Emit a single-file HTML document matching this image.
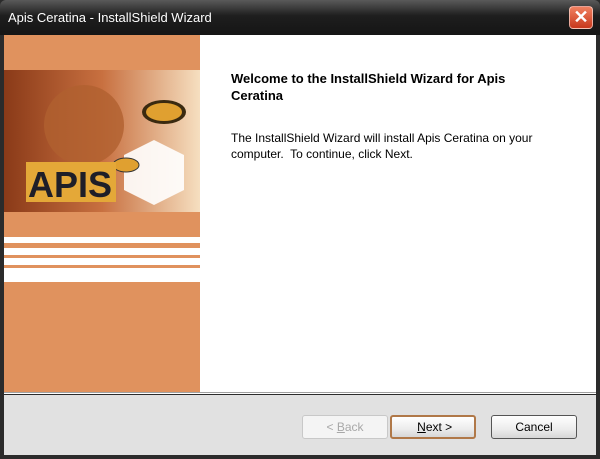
<!DOCTYPE html>
<html><head><meta charset="utf-8"><style>
*{margin:0;padding:0;box-sizing:border-box}
body{width:600px;height:459px;overflow:hidden;background:#2b2b2b;font-family:"Liberation Sans",Arial,sans-serif;position:relative}
.title{position:absolute;left:0;top:0;width:600px;height:35px;background:linear-gradient(#5a5a5a,#1e1e1e 45%,#151515);border-radius:6px 6px 0 0}
.title span{position:absolute;left:8px;top:10px;color:#fff;font-size:13px}
.close{position:absolute;left:569px;top:6px;width:24px;height:23px;border-radius:4px;background:linear-gradient(#f08060,#c8381c);border:1px solid #fff8;color:#fff;font-size:18px;text-align:center;line-height:21px;font-weight:bold}
.left{position:absolute;left:4px;top:35px;width:196px;height:357px;background:#e0925e}
.white{position:absolute;left:200px;top:35px;width:396px;height:357px;background:#fff}
.sep{position:absolute;left:4px;top:392px;width:592px;height:2px;background:#a0a0a0;border-bottom:1px solid #fff}
.bot{position:absolute;left:4px;top:395px;width:592px;height:60px;background:#e1e1e1}
.stripe{position:absolute;left:0;width:196px;background:#fff}
.h{position:absolute;left:231px;top:70px;font-weight:bold;font-size:13px;line-height:17px;width:318px}
.p{position:absolute;left:231px;top:130px;font-size:12px;line-height:16px;width:340px}
.btn{position:absolute;top:415px;height:24px;width:86px;border:1px solid #555;border-radius:3px;background:linear-gradient(#fff,#ececec 60%,#d6d6d6);font-size:12px;text-align:center;line-height:22px}
</style></head><body>
<div class="title"><span>Apis Ceratina - InstallShield Wizard</span><div class="close">✕</div></div>
<div class="left">
 <svg width="196" height="180" style="position:absolute;left:0;top:35px">
  <defs><linearGradient id="g" x1="0" x2="1"><stop offset="0" stop-color="#8a3a18"/><stop offset=".5" stop-color="#c87040"/><stop offset="1" stop-color="#f6dfc0"/></linearGradient></defs>
  <rect x="0" y="0" width="196" height="142" fill="url(#g)"/>
  <circle cx="80" cy="55" r="40" fill="#b06030" opacity=".8"/>
  <polygon points="150,70 180,85 180,120 150,135 120,120 120,85" fill="#fff" opacity=".9"/>
  <ellipse cx="160" cy="42" rx="22" ry="12" fill="#3a2a10"/>
  <ellipse cx="160" cy="42" rx="18" ry="9" fill="#e0a030"/>
  <ellipse cx="122" cy="95" rx="13" ry="7" fill="#e0a030" stroke="#333"/>
  <rect x="22" y="92" width="90" height="40" fill="#e4a838"/>
  <text x="24" y="127" font-family="Liberation Sans" font-weight="bold" font-size="36" fill="#1e1e28">APIS</text>
 </svg>
 <div class="stripe" style="top:202px;height:6px"></div>
 <div class="stripe" style="top:213px;height:7px"></div>
 <div class="stripe" style="top:223px;height:7px"></div>
 <div class="stripe" style="top:233px;height:14px"></div>
</div>
<div class="white"></div>
<div class="h">Welcome to the InstallShield Wizard for Apis Ceratina</div>
<div class="p">The InstallShield Wizard will install Apis Ceratina on your computer.&nbsp; To continue, click Next.</div>
<div class="sep"></div>
<div class="bot"></div>
<div class="btn" style="left:302px;border-color:#c8c8c8;color:#a8a8a8;background:#f4f4f4">&lt; <u>B</u>ack</div>
<div class="btn" style="left:390px;border:2px solid #b07848;line-height:20px">&nbsp;<u>N</u>ext &gt;</div>
<div class="btn" style="left:491px">Cancel</div>
</body></html>
